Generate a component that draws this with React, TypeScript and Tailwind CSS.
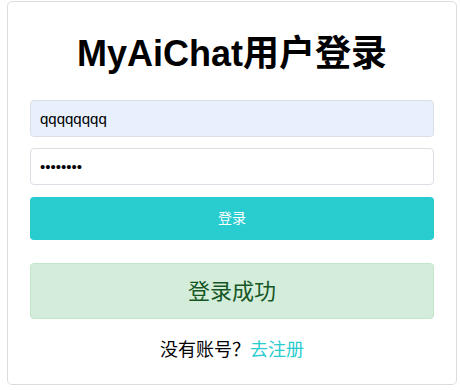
export default function App() {
  return (
    <div className="min-h-[390px] bg-white pt-px pl-[7px] pr-[3px]" style={{ fontFamily: '"Liberation Sans", "Noto Sans CJK SC", sans-serif' }}>
      <div className="h-[384px] rounded-[5px] border border-[#dddddd] px-[22px] pt-[28px]">
        <h1 className="text-center text-[36px] font-bold leading-[48px] text-black">MyAiChat用户登录</h1>
        <div className="mt-[22px] flex flex-col">
          <input
            readOnly
            value="qqqqqqqq"
            className="h-[37px] w-full rounded-[4px] border border-[#dcdfe6] bg-[#e8f0fe] px-[9px] text-[15px] text-black outline-none"
          />
          <input
            readOnly
            type="password"
            value="qqqqqqqq"
            className="mt-[11px] h-[37px] w-full rounded-[4px] border border-[#dcdfe6] bg-white px-[9px] text-[15px] text-black outline-none"
          />
          <button className="mt-[12px] h-[43px] w-full rounded-[4px] bg-[#29cccf] text-[14px] text-white">登录</button>
          <div className="mt-[23px] flex h-[56px] items-center justify-center rounded-[4px] border border-[#c3e6cb] bg-[#d4edda] text-[22px] text-[#155724]">
            登录成功
          </div>
          <p className="mt-[18px] text-center text-[18px] leading-[26px] text-black">
            没有账号？<span className="text-[#29cccf]">去注册</span>
          </p>
        </div>
      </div>
    </div>
  )
}
